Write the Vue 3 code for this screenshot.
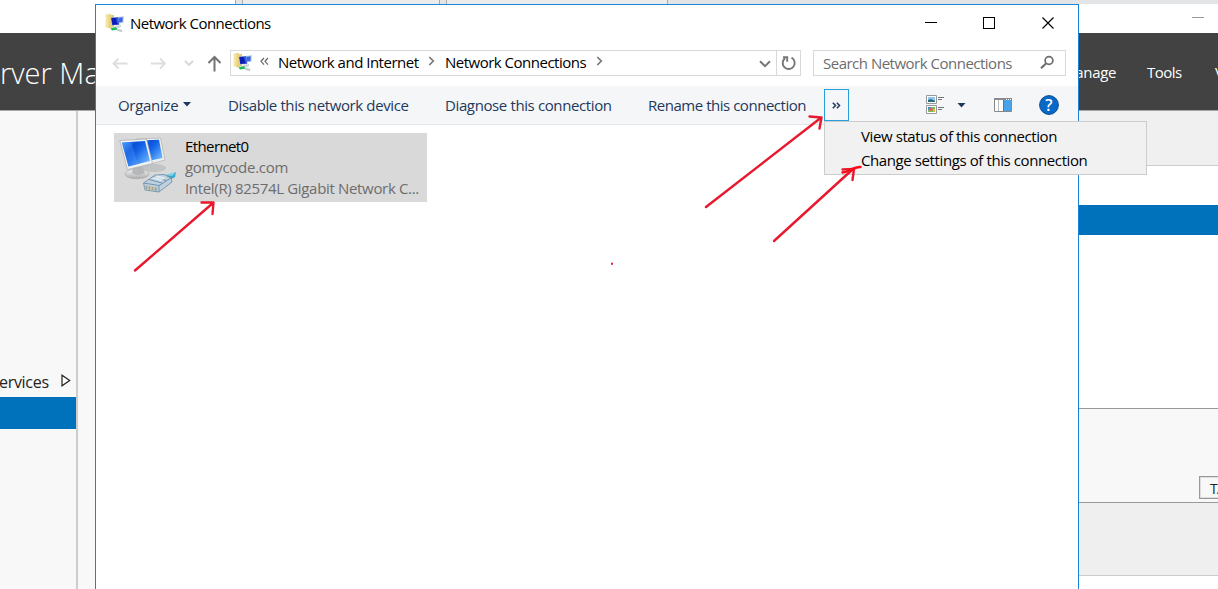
<script setup>
const crumbs = [
  { text: 'Network and Internet', cls: 'crumb-a' },
  { text: 'Network Connections', cls: 'crumb-b' },
]
const commands = [
  { text: 'Disable this network device', cls: 'c-disable' },
  { text: 'Diagnose this connection', cls: 'c-diagnose' },
  { text: 'Rename this connection', cls: 'c-rename' },
]
const arrows = [
  'M135 270.5L213 203M201.500 202.5L213.500 202.5L212.5 214',
  'M706 207L820 118.5M809.500 116.5L821.5 117.5L819.500 128.5',
  'M774 241L853 169M842.500 169.5L854 169L852.5 180',
]
</script>

<template>
  <div class="screen">
    <div class="strip"><i class="tab-first"></i><i class="tab-mid"></i><i class="tab-mid2"></i><i class="tab-last"></i></div>

    <div class="manager">
      <div class="caption"><i></i></div>
      <header class="banner">
        <span class="brand">rver Manager</span>
        <nav><span class="manage">Manage</span><span class="tools">Tools</span><span class="view">View</span></nav>
      </header>
      <div class="body">
        <aside>
          <div class="services"><span>ervices</span>
            <svg width="10" height="13" viewBox="0 0 10 13"><path d="M1 1.2V11.8L8.7 6.5Z" fill="#fff" stroke="#222" stroke-width="1.2" /></svg>
          </div>
          <div class="chosen"></div>
        </aside>
        <div class="gutter"></div>
        <main>
          <div class="band-top"></div>
          <div class="band-white"></div>
          <div class="band-blue"></div>
          <div class="band-space"></div>
          <div class="band-task"><div class="tasks">TASKS</div></div>
          <div class="band-grey"></div>
        </main>
      </div>
    </div>

    <section class="window">
      <div class="titlebar">
        <svg class="app-icon" width="20" height="20"><use href="#netfolder" /></svg>
        <span class="title">Network Connections</span>
        <svg class="controls" width="132" height="14" viewBox="0 0 132 14" fill="none" stroke="#000" shape-rendering="crispEdges">
          <path d="M0 6.5H12M58.500 1.500H69.500V12.500H58.500Z" />
          <path d="M117.500 1.500L128.500 12.500M128.500 1.500L117.500 12.500" shape-rendering="auto" stroke-width="1.150" />
        </svg>
      </div>

      <div class="navbar">
        <svg class="nav-icons" width="112" height="20" viewBox="0 0 112 20" fill="none" stroke-width="1.800">
          <path d="M15.500 9.500H1.500M6.500 4.500L1.500 9.500L6.500 14.500M39 9.500H53M48 4.500L53 9.500L48 14.500" stroke="#dedede" />
          <path d="M73 7L77 11L81 7" stroke="#d7d7d7" />
          <path d="M102.500 17.500V3M96.500 9L102.500 3L108.500 9" stroke="#737373" stroke-width="2" />
        </svg>
        <div class="address">
          <svg class="addr-icon" width="20" height="20" viewBox="0 0 20 20">
            <defs>
              <linearGradient id="fold" x1="0" x2="1"><stop offset="0" stop-color="#f8e9ad" /><stop offset="1" stop-color="#dcc66a" /></linearGradient>
              <g id="netfolder">
                <path d="M.5 1.500L5 .7L6.500 2H9V14L4.500 15.500L.5 14Z" fill="url(#fold)" />
                <path d="M4.500 3V15.500L7 14V2.500Z" fill="#e8d078" />
                <path d="M12 4L19 3L18.500 10L12.500 10.500Z" fill="#c4d8ee" />
                <path d="M13 4.800L17.800 4.200L17.500 9L13.500 9.500Z" fill="#3c66dc" />
                <path d="M6 4.500L13.500 4L14.500 12L7 12.500Z" fill="#9fb6ea" />
                <path d="M6.200 4.900L13 4.500L13.800 11.500L7.300 11.900Z" fill="#0c1cb4" />
                <path d="M11 4.800L13 4.500L13.800 11.500L12 10Z" fill="#2b62e8" />
                <path d="M10 13L16 12V14L12 15.500Z" fill="#ccd4d8" />
                <path d="M5.500 15.500L10.500 14L13 16.500L7 17.500Z" fill="#19bd59" />
                <path d="M13 16L17.500 17L17 19L12 18Z" fill="#bfc9c7" />
              </g>
            </defs>
            <use href="#netfolder" />
          </svg>
          <svg class="more" width="9" height="9" viewBox="0 0 9 9" fill="none" stroke="#666" stroke-width="1.200"><path d="M4 1L1 4.300L4 7.600M8 1L5 4.300L8 7.600" /></svg>
          <template v-for="c in crumbs" :key="c.text">
            <span class="crumb" :class="c.cls">{{ c.text }}</span>
            <svg class="sep" width="7" height="10" viewBox="0 0 7 10" fill="none" stroke="#777" stroke-width="1.700"><path d="M1.300 1L5.300 5L1.300 9" /></svg>
          </template>
          <svg class="drop" width="12" height="8" viewBox="0 0 12 8" fill="none" stroke="#777" stroke-width="2"><path d="M1 1.200L6 6.200L11 1.200" /></svg>
          <div class="refresh">
            <svg width="16" height="16" viewBox="0 0 16 16" fill="none" stroke="#777" stroke-width="1.900"><path d="M10.500 2.700A6 6 0 1 1 4 3.300M2 2.200H6.200V6.800" /></svg>
          </div>
        </div>
        <div class="search">
          <span>Search Network Connections</span>
          <svg width="15" height="15" viewBox="0 0 15 15" fill="none" stroke="#6d6d6d"><circle cx="9" cy="5.500" r="3.900" stroke-width="1.700" /><path d="M6 8.500L1 13.200" stroke-width="2.200" /></svg>
        </div>
      </div>

      <div class="commandbar">
        <span class="cmd c-organize">Organize</span>
        <svg class="caret" width="8" height="5"><path d="M0 0H8L4 4.500Z" fill="#1e395b" /></svg>
        <span v-for="c in commands" :key="c.text" class="cmd" :class="c.cls">{{ c.text }}</span>
        <div class="overflow">
          <svg width="9" height="7" viewBox="0 0 9 7" fill="none" stroke="#1e395b" stroke-width="1.500"><path d="M.8 .8L3.500 3.500L.8 6.200M4.800 .8L7.500 3.500L4.800 6.200" /></svg>
        </div>
        <svg class="tools-right" width="134" height="24" viewBox="0 0 134 24">
          <g fill="#fff" stroke="#999"><path d="M.5 2.500H10.500V10.500H.5ZM.5 12.500H10.500V20.500H.5Z" /></g>
          <path d="M2 4H9V9H2Z" fill="#8fc4ef" /><path d="M2 7L5 6L9 8V9H2Z" fill="#286e78" />
          <path d="M2 14H9V19H2Z" fill="#7dbb64" /><path d="M2 14H5V16.500H2Z" fill="#4a88d4" /><path d="M4 15H6.500V18H4Z" fill="#dc674b" /><path d="M7 16H9V19H7Z" fill="#e5b63f" />
          <path d="M12 4.500H18M12 6.500H16M12 14.500H18M12 16.500H16" stroke="#777" stroke-width="1" />
          <path d="M31.500 10H39.500L35.500 14.500Z" fill="#1e395b" />
          <path d="M68.500 5.500H85.500V18.500H68.500Z" fill="#fff" stroke="#888" />
          <path d="M68 5H86V7H68Z" fill="#898b90" /><path d="M80 6.500H85" stroke="#fff" stroke-dasharray="1 1" />
          <path d="M78 7H85V18H78Z" fill="#4aa3e8" /><path d="M72.500 7V18" stroke="#bbb" /><path d="M77.500 7V18" stroke="#3c7eb8" />
          <circle cx="123" cy="12" r="9.400" fill="#0868c8" stroke="#0a4e92" />
          <text x="123" y="17.500" text-anchor="middle" fill="#fff" font-size="16" font-weight="600">?</text>
        </svg>
      </div>

      <div class="connection">
        <svg width="62" height="62" viewBox="0 0 62 62">
          <defs>
            <linearGradient id="screen" x1="0" y1="0" x2="1" y2=".8"><stop offset="0" stop-color="#439aff" /><stop offset=".35" stop-color="#0a50d9" /><stop offset=".55" stop-color="#1666e8" /><stop offset="1" stop-color="#71b9ff" /></linearGradient>
            <linearGradient id="metal" x1="0" y1="0" x2="0" y2="1"><stop offset="0" stop-color="#f7f7f7" /><stop offset="1" stop-color="#a8aaac" /></linearGradient>
          </defs>
          <ellipse cx="35" cy="33" rx="12" ry="4" fill="#c1c3c4" />
          <path d="M17 4L41.500 3L46 25L24 31Z" fill="#eceeef" stroke="#aeb1b3" stroke-width=".7" />
          <path d="M19 5.500L40 4.800L43.500 23L24 27Z" fill="url(#screen)" />
          <ellipse cx="18" cy="39" rx="12" ry="4.800" fill="url(#metal)" stroke="#aaa" stroke-width=".6" />
          <path d="M14 33L23 31L26 38Q19 42 13 38Z" fill="#b5b7b9" />
          <path d="M.8 5.500L27.500 4L33.500 28.500L8.500 34.500Z" fill="#f0f2f3" stroke="#a9abad" stroke-width=".7" />
          <path d="M2.800 7.500L26 6L31 26L9.500 31.500Z" fill="url(#screen)" />
          <path d="M2.800 7.500L12 7L19 29L9.500 31.500Z" fill="#55a6ff" opacity=".3" />
          <path d="M43 42L57 37L56 42L49 46Z" fill="#3ba9cd" /><path d="M45 40L57 37L53 41Z" fill="#82d1e9" />
          <path d="M24.500 48L36 40L45 39.500L52 43L53 47L40 57L26 55Z" fill="#bfd0de" stroke="#698ba3" stroke-width=".8" />
          <path d="M24.500 48L40 50.500L52 43M40 50.500V57M30 44.500L43 48M34 41.500L47 45.500" stroke="#7095af" stroke-width="1" fill="none" />
          <path d="M26.500 50.500L38 52.500L37.500 56L27 54Z" fill="#98a5a8" /><path d="M29 50.500V54.500M32 51V55M35 51.500V55.500" stroke="#ded39b" stroke-width="1.200" />
          <path d="M38 40.500L47 42.500L42 46L33 43.500Z" fill="#eef6fb" opacity=".7" />
        </svg>
        <div class="conn-text">
          <span class="conn-name">Ethernet0</span>
          <span class="domain">gomycode.com</span>
          <span class="device">Intel(R) 82574L Gigabit Network C...</span>
        </div>
      </div>
    </section>

    <div class="menu">
      <span class="m-view">View status of this connection</span>
      <span class="m-change">Change settings of this connection</span>
    </div>

    <svg class="marks" width="1218" height="589" viewBox="0 0 1218 589" fill="none" stroke="#e8192f" stroke-width="2.400" stroke-linecap="round" stroke-linejoin="round">
      <path v-for="d in arrows" :key="d" :d="d" />
      <path d="M842.500 172.500C849 172 854 166.500 860.500 167" stroke="#fa0a15" />
      <path d="M612 263.500V264" stroke-width="2" />
    </svg>
  </div>
</template>

<style>
html, body { margin: 0; overflow: hidden; }
</style>
<style scoped>
* { box-sizing: border-box; }
.screen { position: relative; width: 1218px; height: 589px; overflow: hidden; background: #fff; font: 15px/20px "Open Sans", "Noto Sans", sans-serif; white-space: nowrap; }
.screen svg { display: block; flex: none; }
.screen span { flex: none; }
.strip { display: flex; height: 4px; padding-left: 235px; background: linear-gradient(90deg, #fff 235px, #e3e4e6 235px); }
.strip i { border-left: 1px solid #aaa; height: 4px; }
.tab-first { width: 7px; }
.tab-mid { width: 197px; background: #ebebeb; }
.tab-mid2 { width: 7px; }
.tab-last { width: 222px; background: #ebebeb; border-right: 1px solid #aaa; }
.manager { height: 585px; display: flex; flex-direction: column; }
.caption { height: 29px; display: flex; justify-content: flex-end; padding: 13px 14px 0 0; }
.caption i { width: 12px; height: 1px; background: #999; }
.banner { height: 78px; flex: none; background: #424242; border-bottom: 1px solid #a5a5a5; color: #fff; display: flex; align-items: center; }
.brand { font-size: 29px; line-height: 40px; font-weight: 300; width: 1062px; padding-top: 3px; }
.banner nav { display: flex; }
.manage { width: 85px; letter-spacing: -.3px; }
.tools { width: 68px; letter-spacing: -.55px; }
.body { flex: 1; display: flex; }
aside { width: 76px; background: #f8f8f8; padding-top: 261px; }
.services { height: 25px; display: flex; align-items: flex-start; font-size: 16px; color: #222; }
.services span { width: 61px; letter-spacing: -.3px; margin-left: -1px; margin-right: 1px; }
.services svg { margin-top: 2px; }
.chosen { height: 32px; background: #0072bc; }
.gutter { width: 20px; background: #f8f8f8; border-left: 2px solid #ccc; }
main { flex: 1; min-width: 0; overflow: hidden; }
.band-top { height: 55px; background: #f0f0f0; border-bottom: 1px solid #ccc; }
.band-white { height: 39px; }
.band-blue { height: 30px; background: #0072bc; }
.band-space { height: 173px; }
.band-task { height: 95px; background: #f8f8f8; border-top: 1px solid #999; border-bottom: 1px solid #999; display: flex; padding: 67px 0 0 1103px; }
.tasks { width: 70px; height: 23px; border: 1px solid #999; box-shadow: inset 0 0 0 1px #ddd; padding: 2px 0 0 10px; font-size: 14px; letter-spacing: -.6px; color: #222; flex: none; }
.band-grey { height: 73px; background: #efefef; border-bottom: 1px solid #ccc; }
.window { position: absolute; left: 95px; top: 4px; width: 984px; height: 590px; background: #fff; border: 1px solid #1883d7; }
.titlebar { height: 38px; display: flex; align-items: center; padding: 0 0 2px 9px; }
.app-icon { margin-right: 5px; }
.title { letter-spacing: -.52px; }
.controls { margin-left: auto; margin-right: 21px; }
.navbar { height: 43px; display: flex; align-items: center; padding: 0 12px 4px 16px; }
.nav-icons { margin-right: 6px; margin-top: 3px; }
.address { width: 571px; height: 26px; border: 1px solid #d9d9d9; display: flex; align-items: center; padding-left: 2px; }
.address span { margin-top: -1px; }
.addr-icon { margin-top: -2px; }
.more { margin-left: 7px; margin-right: 9px; margin-top: -2px; }
.crumb { letter-spacing: -.5px; }
.crumb-a { width: 150px; }
.crumb-b { width: 151px; }
.crumb-a + .sep { margin-right: 10px; }
.sep { margin-top: -3px; }
.drop { margin-left: auto; margin-top: 3px; }
.refresh { width: 24px; height: 24px; border-left: 1px solid #d9d9d9; margin-left: 5px; padding: 4px 0 0 4px; }
.search { width: 253px; height: 26px; border: 1px solid #d9d9d9; margin-left: 12px; display: flex; align-items: center; justify-content: space-between; padding: 0 10px 0 9px; color: #6d6d6d; }
.search span { letter-spacing: -.5px; padding-top: 1px; }
.commandbar { height: 39px; background: #f5f6f8; border-bottom: 1px solid #e5e7eb; display: flex; align-items: center; padding-left: 22px; color: #1e395b; }
.cmd { letter-spacing: -.38px; }
.c-organize { width: 65px; letter-spacing: -.3px; }
.caret { margin-right: 37px; margin-top: -2px; }
.c-disable { width: 217px; }
.c-diagnose { width: 203px; }
.c-rename { width: 176px; letter-spacing: -.47px; }
.overflow { width: 25px; height: 32px; border: 1px solid #26a0da; display: flex; align-items: center; justify-content: center; }
.tools-right { margin-left: 77px; }
.connection { width: 313px; height: 69px; margin: 8px 0 0 18px; background: #d9d9d9; display: flex; padding: 2px 0 0 5px; }
.conn-text { display: flex; flex-direction: column; margin-left: 4px; line-height: 21px; color: #6d6d6d; padding-top: 1px; }
.conn-name { color: #000; letter-spacing: -.6px; }
.domain { letter-spacing: -.28px; }
.device { letter-spacing: -.33px; }
.menu { position: absolute; left: 824px; top: 121px; width: 323px; height: 54px; border: 1px solid #ccc; background: #f1f1f1; padding: 2px 0 0 36px; display: flex; flex-direction: column; line-height: 24px; color: #000; letter-spacing: -.4px; }
.marks { position: absolute; left: 0; top: 0; }
</style>
